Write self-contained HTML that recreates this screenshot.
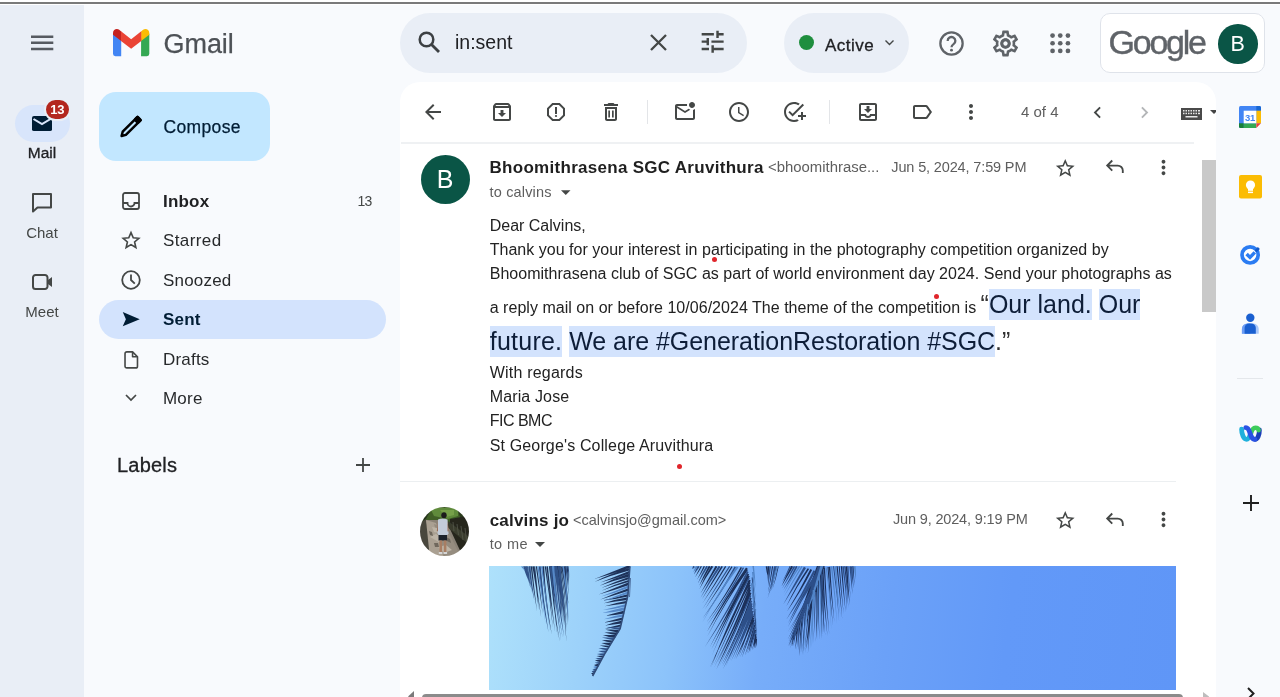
<!DOCTYPE html>
<html lang="en">
<head>
<meta charset="utf-8">
<title>Gmail</title>
<style>
*{box-sizing:border-box;margin:0;padding:0}
html,body{width:1280px;height:697px;overflow:hidden}
body{position:relative;will-change:transform;background:#f8fafd;font-family:"Liberation Sans",sans-serif;color:#202124}
.abs{position:absolute}
.t{position:absolute;white-space:nowrap;line-height:1}
svg{position:absolute;overflow:visible}
#topwhite{left:0;top:0;width:1280px;height:5px;background:#fff}
#topline{left:0;top:2px;width:1280px;height:2px;background:#7a7a7a}
#rail{left:0;top:5px;width:84px;height:692px;background:#e9eef6}
#mailpill{left:15px;top:104.500px;width:55px;height:37px;border-radius:19px;background:#d8e5fb}
#badge{left:43.500px;top:98px;width:27.500px;height:23px;border-radius:12px;background:#b3261e;border:2px solid #e9eef6;color:#fff;font-weight:bold;font-size:13px;text-align:center;line-height:19px;letter-spacing:-0.300px}
#compose{left:99px;top:92px;width:171px;height:69px;border-radius:17px;background:#c2e7ff}
#sentpill{left:99px;top:300px;width:287px;height:39px;border-radius:20px;background:#d3e3fd}
.nav{font-size:17px;color:#27292b;letter-spacing:0.2px;margin-top:1px}
.rl{font-size:15px;color:#444746;width:84px;text-align:center;left:0}
#search{left:400px;top:13px;width:347px;height:60px;border-radius:30px;background:#e9eef6}
#active{left:784.300px;top:13px;width:125px;height:60px;border-radius:30px;background:#e9eef6}
#gbox{left:1100px;top:13px;width:165px;height:60px;border-radius:10px;background:#fff;border:1px solid #dfe3ea}
#gavatar{left:1218px;top:24px;width:39.500px;height:39.500px;border-radius:50%;background:#0a5546;color:#fff;font-size:21.500px;text-align:center;line-height:41px}
#panel{left:400px;top:82px;width:816px;height:615px;background:#fff;border-radius:20px 20px 0 0}
#tbline{left:401px;top:141.5px;width:793px;height:2px;background:#eff1f3}
#msgline{left:400px;top:481px;width:776px;height:1px;background:#eceff1}
#av1{left:420.500px;top:154.800px;width:49px;height:49px;border-radius:50%;background:#0a5546;color:#fff;font-size:25px;text-align:center;line-height:49px}
.body{font-size:16px;color:#222}
.big{font-size:25px;color:#333;line-height:30px}
.hl{background:#d3e3fd;display:inline-block;height:30.500px;line-height:30px;color:#0d1d38}
.meta{font-size:14.5px;color:#5e5e5e}
#vscroll{left:1202px;top:160px;width:14px;height:151.500px;background:#c9c9c9}
#hscroll{left:422px;top:694px;width:761px;height:5px;background:#8b8b8b;border-radius:4px 4px 0 0}
#photo{left:489px;top:566px;width:687px;height:123.500px;background:linear-gradient(97deg,#aee1fb 0%,#9dd2fa 14%,#8cc3fa 27%,#77adf9 40%,#6ba1f8 58%,#6299f8 75%,#5f96f7 100%);overflow:hidden}
</style>
</head>
<body>
<div class="abs" id="topwhite"></div>
<div class="abs" id="topline"></div>
<div class="abs" id="rail"></div>

<!-- hamburger -->
<svg style="left:31px;top:33px" width="22" height="20" viewBox="0 0 22 20"><path d="M0 3.700h22.300M0 9.850h22.300M0 16h22.300" stroke="#565a61" stroke-width="2.500" fill="none"/></svg>

<!-- rail -->
<div class="abs" id="mailpill"></div>
<svg style="left:32px;top:116px" width="20" height="15" viewBox="0 0 20 16" preserveAspectRatio="none"><path d="M2 0h16a2 2 0 0 1 2 2v12a2 2 0 0 1-2 2H2a2 2 0 0 1-2-2V2a2 2 0 0 1 2-2z" fill="#001d35"/><path d="M1.500 3.200L10 8.600l8.500-5.400" stroke="#d8e5fb" stroke-width="2.2" fill="none"/></svg>
<div class="abs" id="badge">13</div>
<div class="t rl" style="top:145.300px;color:#202124;font-size:15.500px;-webkit-text-stroke:0.300px #202124">Mail</div>
<svg style="left:32px;top:193px" width="20" height="20" viewBox="0 0 20 20"><path d="M1 1h18v13.500H5.500L1 18.500z" stroke="#444746" stroke-width="2" fill="none" stroke-linejoin="round"/></svg>
<div class="t rl" style="top:225px">Chat</div>
<svg style="left:32px;top:273.600px" width="21" height="16" viewBox="0 0 21 16"><path d="M3.500 1h9.500a2.500 2.500 0 0 1 2.500 2.500v9a2.500 2.500 0 0 1-2.500 2.500H3.500A2.500 2.500 0 0 1 1 12.500v-9A2.500 2.500 0 0 1 3.500 1z" stroke="#444746" stroke-width="2" fill="none"/><path d="M16 6l4-3v10l-4-3z" fill="#444746"/></svg>
<div class="t rl" style="top:304px">Meet</div>

<!-- logo -->
<svg style="left:113px;top:29px" width="36.300" height="27.300" viewBox="0 0 38 28" preserveAspectRatio="none">
<path d="M0 5v20.500a2.500 2.500 0 0 0 2.500 2.500H8.600V10z" fill="#4285f4"/>
<path d="M29.400 10v18h6.100a2.500 2.500 0 0 0 2.500-2.500V5z" fill="#34a853"/>
<path d="M29.400 2.500V12.300L38 6V4c0-3.500-4-5.300-6.500-3.200z" fill="#fbbc04"/>
<path d="M0 4v2l8.600 6.300V2.500L6.500 0.800C4-1.300 0 0.500 0 4z" fill="#c5221f"/>
<path d="M8.400 12.200V2.400L19 10.500l10.600-8.100V12.200L19 20.200z" fill="#ea4335"/>
</svg>
<div class="t" style="left:163.600px;top:31px;font-size:27px;color:#4d5156;letter-spacing:-0.100px;-webkit-text-stroke:0.250px #4d5156">Gmail</div>

<!-- compose -->
<div class="abs" id="compose"></div>
<svg style="left:119px;top:115px" width="24" height="24" viewBox="0 0 24 24"><g transform="translate(12,11.600) rotate(45)"><path d="M-2.250 -11.500h4.500V9.500L0 13.300L-2.250 9.500z" stroke="#000" stroke-width="2.500" fill="none" stroke-linejoin="round"/><rect x="-3.500" y="-12.750" width="7" height="6.500" rx="2" fill="#000"/></g></svg>
<div class="t" style="left:163.500px;top:119px;font-size:17.500px;color:#001d35;letter-spacing:0.350px;-webkit-text-stroke:0.250px #001d35">Compose</div>

<!-- nav -->
<div class="abs" id="sentpill"></div>
<svg style="left:122px;top:192px" width="18" height="18" viewBox="0 0 18 18"><path d="M3 1h12a2 2 0 0 1 2 2v12a2 2 0 0 1-2 2H3a2 2 0 0 1-2-2V3a2 2 0 0 1 2-2z" stroke="#444746" stroke-width="1.800" fill="none"/><path d="M1 11h4.500a3.500 3.500 0 0 0 7 0H17" stroke="#444746" stroke-width="1.800" fill="none"/></svg>
<div class="t nav" style="left:163px;top:192px;font-weight:bold;color:#202124">Inbox</div>
<div class="t" style="left:357.500px;top:194px;font-size:14px;color:#444746;letter-spacing:-0.900px">13</div>
<svg style="left:122px;top:231.200px" width="18" height="18" viewBox="0 0 20 20"><path d="M10 1.800l2.500 5.700l6.200 0.600l-4.700 4.100l1.400 6.100L10 15.100l-5.400 3.200l1.400-6.100L1.300 8.100l6.200-0.600z" stroke="#444746" stroke-width="1.800" fill="none" stroke-linejoin="miter"/></svg>
<div class="t nav" style="left:163px;top:231px;letter-spacing:0.4px">Starred</div>
<svg style="left:121px;top:270px" width="20" height="20" viewBox="0 0 20 20"><circle cx="10" cy="10" r="8.800" stroke="#444746" stroke-width="1.800" fill="none"/><path d="M10 4.500V10l3.800 3.600" stroke="#444746" stroke-width="1.800" fill="none"/></svg>
<div class="t nav" style="left:163px;top:271px">Snoozed</div>
<svg style="left:121.700px;top:312.300px" width="18.500" height="14.300" viewBox="0 0 19 16"><path d="M0 0l19 8L0 16l3.500-8z" fill="#001d35"/></svg>
<div class="t nav" style="left:163px;top:310px;font-weight:bold;color:#001d35">Sent</div>
<svg style="left:123.800px;top:351px" width="14.500" height="17.800" viewBox="0 0 16 20"><path d="M1 3a2 2 0 0 1 2-2h6.500L15 6.500V17a2 2 0 0 1-2 2H3a2 2 0 0 1-2-2z" stroke="#444746" stroke-width="1.800" fill="none" stroke-linejoin="round"/><path d="M9.500 1v5.500H15" stroke="#444746" stroke-width="1.800" fill="none" stroke-linejoin="round"/></svg>
<div class="t nav" style="left:163px;top:350px">Drafts</div>
<svg style="left:125px;top:394px" width="12" height="8" viewBox="0 0 12 8"><path d="M1 1l5 5l5-5" stroke="#444746" stroke-width="1.700" fill="none"/></svg>
<div class="t nav" style="left:163px;top:389px">More</div>
<div class="t" style="left:117px;top:455px;font-size:20px;color:#202124;letter-spacing:0.200px;-webkit-text-stroke:0.300px #202124">Labels</div>
<svg style="left:356px;top:458px" width="14" height="14" viewBox="0 0 14 14"><path d="M7 0v14M0 7h14" stroke="#444746" stroke-width="1.800"/></svg>

<!-- search -->
<div class="abs" id="search"></div>
<svg style="left:418px;top:31px" width="23" height="23" viewBox="0 0 23 23"><circle cx="8.500" cy="8.500" r="6.800" stroke="#3c4043" stroke-width="2.500" fill="none"/><path d="M13.500 13.500l7.500 7.500" stroke="#3c4043" stroke-width="2.800"/></svg>
<div class="t" style="left:455px;top:33px;font-size:19.500px;color:#202124">in:sent</div>
<svg style="left:650px;top:34px" width="17" height="17" viewBox="0 0 17 17"><path d="M1 1l15 15M16 1L1 16" stroke="#444746" stroke-width="2.300"/></svg>
<svg style="left:697.900px;top:27.200px" width="29.300" height="29.300" viewBox="0 0 24 24"><path fill="#444746" d="M3 17v2h6v-2H3zM3 5v2h10V5H3zm10 16v-2h8v-2h-8v-2h-2v6h2zM7 9v2H3v2h4v2h2V9H7zm14 4v-2H11v2h10zm-6-4h2V7h4V5h-4V3h-2v6z"/></svg>

<!-- active -->
<div class="abs" id="active"></div>
<div class="abs" style="left:798.800px;top:35.200px;width:15px;height:15px;border-radius:50%;background:#1e8e3e"></div>
<div class="t" style="left:825px;top:36.500px;font-size:17px;color:#202124;letter-spacing:0.500px;-webkit-text-stroke:0.300px #202124">Active</div>
<svg style="left:885.200px;top:40px" width="9" height="6" viewBox="0 0 9 6"><path d="M0.500 0.500l4 4l4-4" stroke="#444746" stroke-width="1.400" fill="none"/></svg>

<!-- help, settings, apps -->
<svg style="left:939.100px;top:30.500px" width="25" height="25" viewBox="0 0 24 24"><circle cx="12" cy="12" r="10.700" stroke="#5f6368" stroke-width="2.200" fill="none"/><path d="M8.300 9.500a3.700 3.700 0 1 1 5.700 3.100c-1.300 0.900-2 1.500-2 3" stroke="#5f6368" stroke-width="2.200" fill="none"/><circle cx="12" cy="18.400" r="1.400" fill="#5f6368"/></svg>
<svg style="left:990px;top:27.500px" width="31" height="31" viewBox="0 0 24 24"><path d="M19.430 12.980c.040-.320.070-.640.070-.980s-.030-.660-.070-.980l2.110-1.650c.190-.150.240-.420.120-.640l-2-3.460c-.120-.220-.390-.300-.610-.220l-2.490 1c-.520-.400-1.080-.730-1.690-.980l-.380-2.650C14.460 2.180 14.250 2 14 2h-4c-.250 0-.460.180-.490.420l-.380 2.650c-.610.250-1.170.590-1.690.980l-2.490-1c-.230-.090-.490 0-.610.220l-2 3.460c-.130.220-.070.490.12.640l2.110 1.650c-.040.320-.070.650-.070.980s.030.660.070.980l-2.110 1.650c-.190.150-.240.420-.120.640l2 3.460c.120.220.390.300.610.220l2.490-1c.520.400 1.080.730 1.690.980l.380 2.650c.030.240.240.420.490.420h4c.250 0 .460-.180.490-.420l.380-2.650c.610-.250 1.170-.590 1.690-.980l2.490 1c.230.090.490 0 .610-.220l2-3.460c.120-.220.070-.490-.12-.640l-2.110-1.650zm-1.980-1.710c.040.310.050.520.050.730 0 .210-.020.430-.050.730l-.140 1.130.890.700 1.080.840-.700 1.210-1.270-.510-1.040-.420-.900.680c-.430.320-.840.560-1.250.730l-1.060.430-.160 1.130-.200 1.350h-1.400l-.190-1.350-.160-1.130-1.060-.430c-.430-.180-.830-.410-1.230-.710l-.910-.700-1.060.430-1.270.510-.700-1.210 1.080-.840.890-.700-.140-1.130c-.030-.310-.050-.540-.050-.740s.020-.430.050-.730l.140-1.130-.890-.700-1.080-.840.700-1.210 1.270.510 1.040.420.900-.680c.430-.320.840-.560 1.250-.730l1.060-.430.160-1.130.200-1.350h1.390l.190 1.350.160 1.130 1.060.430c.430.180.830.410 1.230.71l.910.700 1.060-.430 1.270-.510.700 1.210-1.070.850-.890.700.140 1.130zM12 8c-2.210 0-4 1.790-4 4s1.790 4 4 4 4-1.790 4-4-1.790-4-4-4zm0 6c-1.100 0-2-.900-2-2s.900-2 2-2 2 .900 2 2-.900 2-2 2z" fill="#5f6368"/><circle cx="12" cy="12" r="2.800" stroke="#5f6368" stroke-width="2.200" fill="none"/></svg>
<svg style="left:1049.700px;top:32.700px" width="20.500" height="20.500" viewBox="0 0 20 20"><g fill="#5f6368"><circle cx="2.500" cy="2.500" r="2.300"/><circle cx="10" cy="2.500" r="2.300"/><circle cx="17.500" cy="2.500" r="2.300"/><circle cx="2.500" cy="10" r="2.300"/><circle cx="10" cy="10" r="2.300"/><circle cx="17.500" cy="10" r="2.300"/><circle cx="2.500" cy="17.500" r="2.300"/><circle cx="10" cy="17.500" r="2.300"/><circle cx="17.500" cy="17.500" r="2.300"/></g></svg>

<!-- google box -->
<div class="abs" id="gbox"></div>
<div class="t" style="left:1108.600px;top:24.500px;font-size:34px;color:#5f6368;letter-spacing:-2.250px;-webkit-text-stroke:0.400px #5f6368">Google</div>
<div class="abs" id="gavatar">B</div>

<!-- main panel -->
<div class="abs" id="panel"></div>
<div class="abs" id="tbline"></div>

<!-- toolbar -->
<svg style="left:420.50px;top:100.00px" width="24" height="24" viewBox="0 0 24 24"><path fill="#444746" d="M20 11H7.830l5.590-5.590L12 4l-8 8 8 8 1.410-1.410L7.830 13H20v-2z"/></svg>
<svg style="left:489.50px;top:100.00px" width="24" height="24" viewBox="0 0 24 24"><path fill="#444746" d="M20.540 5.230l-1.390-1.680C18.880 3.210 18.470 3 18 3H6c-.470 0-.880.210-1.160.550L3.460 5.230C3.170 5.570 3 6.020 3 6.500V19c0 1.100.900 2 2 2h14c1.100 0 2-.900 2-2V6.500c0-.480-.170-.930-.460-1.270zM6.240 5h11.520l.810.970H5.440l.800-.970zM5 19V8h14v11H5zm8.450-9h-2.900v3H8l4 4 4-4h-2.550z"/></svg>
<svg style="left:544.00px;top:100.00px" width="24" height="24" viewBox="0 0 24 24"><path fill="#444746" d="M15.730 3H8.270L3 8.270v7.460L8.270 21h7.460L21 15.730V8.270L15.730 3zM19 14.900L14.900 19H9.100L5 14.900V9.100L9.100 5h5.800L19 9.100v5.800z"/><circle cx="12" cy="16" r="1.100" fill="#444746"/><path fill="#444746" d="M11 7h2v7h-2z"/></svg>
<svg style="left:598.50px;top:100.00px" width="24" height="24" viewBox="0 0 24 24"><path fill="#444746" d="M16 9v10H8V9h8m-1.500-6h-5l-1 1H5v2h14V4h-3.500l-1-1zM18 7H6v12c0 1.100.900 2 2 2h8c1.100 0 2-.900 2-2V7z"/><path fill="#444746" d="M9.300 10.500h1.700v7H9.300zM13 10.500h1.700v7H13z"/></svg>
<svg style="left:673.00px;top:100.00px" width="24" height="24" viewBox="0 0 24 24"><path fill="#444746" d="M22 8.980V18c0 1.100-.900 2-2 2H4c-1.100 0-2-.900-2-2V6c0-1.100.900-2 2-2h10.100c-.060.320-.100.660-.100 1s.040.680.100 1H4l8 5 3.670-2.290c.470.430 1.020.760 1.630.980L12 13 4 8v10h16V9.900c.740-.150 1.420-.480 2-.920zM16 5c0 1.660 1.340 3 3 3s3-1.340 3-3-1.340-3-3-3-3 1.340-3 3z"/></svg>
<svg style="left:727.00px;top:100.00px" width="24" height="24" viewBox="0 0 24 24"><path fill="#444746" d="M11.990 2C6.470 2 2 6.480 2 12s4.470 10 9.990 10C17.520 22 22 17.520 22 12S17.520 2 11.990 2zM12 20c-4.420 0-8-3.580-8-8s3.580-8 8-8 8 3.580 8 8-3.580 8-8 8zm.5-13H11v6l5.250 3.150.750-1.230-4.500-2.670z"/></svg>
<svg style="left:781.50px;top:100.00px" width="24" height="24" viewBox="0 0 24 24"><path fill="#444746" d="M22 5.180L10.590 16.600l-4.240-4.240 1.410-1.410 2.830 2.830 10-10L22 5.180zM12 20c-4.410 0-8-3.590-8-8s3.590-8 8-8c1.570 0 3.040.460 4.280 1.250l1.450-1.450C16.100 2.670 14.130 2 12 2 6.480 2 2 6.480 2 12s4.480 10 10 10c1.730 0 3.360-.440 4.780-1.220l-1.500-1.500c-1 .460-2.110.720-3.280.720zm7-5h-3v2h3v3h2v-3h3v-2h-3v-3h-2v3z"/></svg>
<svg style="left:855.75px;top:100.00px" width="24" height="24" viewBox="0 0 24 24"><path fill="#444746" d="M16 9h-2.550V6h-2.900v3H8l4 4zm3-6H4.990C3.880 3 3 3.900 3 5v14c0 1.100.880 2 1.990 2H19c1.100 0 2-.900 2-2V5c0-1.100-.900-2-2-2zm0 16H5v-3h3.560c.690 1.190 1.970 2 3.450 2s2.750-.810 3.450-2H19v3zm0-5h-4.990c0 1.100-.900 2-2 2s-2-.900-2-2H5V5h14v9z"/></svg>
<svg style="left:909.50px;top:100.00px" width="24" height="24" viewBox="0 0 24 24"><path fill="#444746" d="M17.630 5.840C17.270 5.330 16.670 5 16 5L5 5.010C3.900 5.010 3 5.900 3 7v10c0 1.100.900 1.990 2 1.990L16 19c.670 0 1.270-.330 1.630-.840L22 12l-4.370-6.160zM16 17H5V7h11l3.550 5L16 17z"/></svg>
<svg style="left:959.00px;top:100.00px" width="24" height="24" viewBox="0 0 24 24"><path fill="#444746" d="M12 8c1.100 0 2-.900 2-2s-.900-2-2-2-2 .900-2 2 .900 2 2 2zm0 2c-1.100 0-2 .900-2 2s.900 2 2 2 2-.900 2-2-.900-2-2-2zm0 6c-1.100 0-2 .900-2 2s.900 2 2 2 2-.900 2-2-.900-2-2-2z"/></svg>
<div class="abs" style="left:646.5px;top:100px;width:1px;height:24px;background:#e3e5e8"></div>
<div class="abs" style="left:829px;top:100px;width:1px;height:24px;background:#e3e5e8"></div>
<div class="t" style="left:1021px;top:104px;font-size:15px;color:#5e5e5e">4 of 4</div>
<svg style="left:1086.00px;top:100.50px" width="23" height="23" viewBox="0 0 24 24"><path fill="#444746" d="M15.410 7.410L14 6l-6 6 6 6 1.410-1.410L10.830 12z"/></svg>
<svg style="left:1133.00px;top:100.50px" width="23" height="23" viewBox="0 0 24 24"><path fill="#b4b6b8" d="M10 6L8.590 7.410 13.170 12l-4.580 4.590L10 18l6-6z"/></svg>
<svg style="left:1180.5px;top:107.5px" width="21" height="12" viewBox="0 0 21 12"><rect width="21" height="12" fill="#4a4a4a"/><g fill="#e8e8e8"><rect x="2" y="2" width="1.500" height="1.500"/><rect x="4.500" y="2" width="1.500" height="1.500"/><rect x="7" y="2" width="1.500" height="1.500"/><rect x="9.500" y="2" width="1.500" height="1.500"/><rect x="12" y="2" width="1.500" height="1.500"/><rect x="14.500" y="2" width="1.500" height="1.500"/><rect x="17" y="2" width="2" height="1.500"/><rect x="2" y="4.700" width="1.500" height="1.500"/><rect x="4.500" y="4.700" width="1.500" height="1.500"/><rect x="7" y="4.700" width="1.500" height="1.500"/><rect x="9.500" y="4.700" width="1.500" height="1.500"/><rect x="12" y="4.700" width="1.500" height="1.500"/><rect x="14.500" y="4.700" width="1.500" height="1.500"/><rect x="17" y="4.700" width="2" height="1.500"/><rect x="4.500" y="8" width="12" height="1.500"/></g></svg>
<svg style="left:1210px;top:109.5px;overflow:hidden" width="6" height="4" viewBox="0 0 6 4"><path d="M0 0h8L4 4z" fill="#444"/></svg>
<!-- msg icons -->
<svg style="left:1053.75px;top:156.75px" width="22.5" height="22.5" viewBox="0 0 24 24"><path fill="#444746" d="M22 9.240l-7.190-.620L12 2 9.190 8.630 2 9.240l5.460 4.730L5.820 21 12 17.270 18.180 21l-1.630-7.030L22 9.240zM12 15.400l-3.760 2.270 1-4.280-3.320-2.880 4.380-.380L12 6.100l1.710 4.040 4.380.380-3.320 2.880 1 4.280L12 15.400z"/></svg>
<svg style="left:1104.00px;top:155.30px" width="22" height="22" viewBox="0 0 24 24"><path stroke="#444746" stroke-width="2" fill="none" d="M9 6L3.500 11.500l5.500 5.500M3.500 11.500h11.500a5.500 5.500 0 0 1 5.500 5.500v2.500"/></svg>
<svg style="left:1152.30px;top:156.00px" width="23" height="23" viewBox="0 0 24 24"><path fill="#444746" d="M12 8c1.100 0 2-.900 2-2s-.900-2-2-2-2 .900-2 2 .900 2 2 2zm0 2c-1.100 0-2 .900-2 2s.900 2 2 2 2-.900 2-2-.900-2-2-2zm0 6c-1.100 0-2 .900-2 2s.900 2 2 2 2-.900 2-2-.900-2-2-2z"/></svg>
<svg style="left:1053.75px;top:509.100px" width="22.5" height="22.5" viewBox="0 0 24 24"><path fill="#444746" d="M22 9.240l-7.190-.620L12 2 9.190 8.630 2 9.240l5.460 4.730L5.820 21 12 17.270 18.180 21l-1.630-7.030L22 9.240zM12 15.400l-3.760 2.270 1-4.280-3.320-2.880 4.380-.380L12 6.100l1.710 4.040 4.380.380-3.320 2.880 1 4.280L12 15.400z"/></svg>
<svg style="left:1104.00px;top:507.80px" width="22" height="22" viewBox="0 0 24 24"><path stroke="#444746" stroke-width="2" fill="none" d="M9 6L3.500 11.500l5.500 5.500M3.500 11.500h11.500a5.500 5.500 0 0 1 5.500 5.500v2.500"/></svg>
<svg style="left:1152.30px;top:507.80px" width="23" height="23" viewBox="0 0 24 24"><path fill="#444746" d="M12 8c1.100 0 2-.900 2-2s-.900-2-2-2-2 .900-2 2 .900 2 2 2zm0 2c-1.100 0-2 .900-2 2s.900 2 2 2 2-.900 2-2-.900-2-2-2zm0 6c-1.100 0-2 .900-2 2s.900 2 2 2 2-.900 2-2-.900-2-2-2z"/></svg>
<svg style="left:561px;top:189.500px" width="9.500" height="5" viewBox="0 0 10 5"><path d="M0 0h10L5 5z" fill="#444746"/></svg>
<svg style="left:535px;top:542px" width="10" height="5" viewBox="0 0 10 5"><path d="M0 0h10L5 5z" fill="#444746"/></svg>
<!-- side panel -->
<svg style="left:1239px;top:105.500px" width="22" height="22" viewBox="0 0 22 22">
<rect x="0" y="0" width="22" height="22" rx="1.500" fill="#4285f4"/>
<path d="M17.300 0H20.500A1.500 1.500 0 0 1 22 1.500V4.700H17.300z" fill="#1967d2"/>
<rect x="17.300" y="4.700" width="4.700" height="12.600" fill="#fbbc04"/>
<rect x="4.700" y="17.300" width="12.600" height="4.700" fill="#34a853"/>
<path d="M0 17.300H4.700V22H1.500A1.500 1.500 0 0 1 0 20.500z" fill="#188038"/>
<path d="M17.300 17.300H22V22H17.300z" fill="#f8fafd"/>
<path d="M17.300 17.300H22L17.300 22z" fill="#ea4335"/>
<rect x="4.700" y="4.700" width="12.600" height="12.600" fill="#fff"/>
<text x="10.900" y="14.600" font-family="Liberation Sans, sans-serif" font-size="9.500" font-weight="bold" fill="#4285f4" text-anchor="middle" letter-spacing="-0.500">31</text>
</svg>
<svg style="left:1239px;top:174.500px" width="23" height="23.500" viewBox="0 0 23 23.500">
<rect width="23" height="23.500" rx="2" fill="#fbbc04"/>
<circle cx="11.500" cy="10" r="4.600" fill="#fff"/>
<rect x="9" y="13.500" width="5" height="2.300" fill="#fff"/>
<rect x="9" y="16.600" width="5" height="1.500" fill="#fff"/>
</svg>
<svg style="left:1238px;top:243px" width="24" height="24" viewBox="0 0 24 24">
<circle cx="12.100" cy="11.900" r="8.100" stroke="#2b7cf2" stroke-width="3.700" fill="#fff"/>
<path d="M16.600 7.200l3.300-3.300l2 2l-3.300 3.300z" fill="#1259c9"/>
<path d="M8.600 11l3.400 3.400l4.800-5" stroke="#2b7cf2" stroke-width="3.400" fill="none"/>
</svg>
<svg style="left:1241px;top:313px" width="19" height="21" viewBox="0 0 19 21">
<circle cx="9.300" cy="4.800" r="4.200" fill="#1a5fd0"/>
<path d="M0.900 20.700V16a5.500 5.500 0 0 1 5.500-5.500h6.200A5.500 5.500 0 0 1 17.700 16v4.700z" fill="#a8c7fa"/>
<path d="M0.900 20.700V16a5.500 5.500 0 0 1 5.500-5.500h3v10.200z" fill="#6b9cf5"/>
<path d="M3.600 20.700V15a4.500 4.500 0 0 1 4.500-4.500h2.200A4.500 4.500 0 0 1 14.800 15v5.700z" fill="#1a5fd0"/>
</svg>
<div class="abs" style="left:1237px;top:378px;width:26px;height:1px;background:#e4e7eb"></div>
<svg style="left:1239px;top:425px" width="23" height="17" viewBox="0 0 23 17">
<path d="M2.600 4.200C2.600 9 4.600 14.300 7.600 14.300C9.800 14.300 10.600 11.500 11.500 8.500" stroke="#1fb0dc" stroke-width="4.800" fill="none" stroke-linecap="round"/>
<path d="M20.400 5C20.400 9.500 18.800 14.300 16 14.300" stroke="#1a3fb8" stroke-width="4.800" fill="none" stroke-linecap="round"/>
<path d="M11.800 9C12.800 5 14 2.700 16.400 2.700C18.300 2.700 19.300 3.600 19.600 5.200" stroke="#3dcc5b" stroke-width="4.600" fill="none" stroke-linecap="round"/>
<path d="M6.800 2.700C10 2.700 10.500 7 11.800 10.500C12.800 13 14 14.300 16 14.300" stroke="#2a52e4" stroke-width="4.800" fill="none" stroke-linecap="round"/>
</svg>
<svg style="left:1242.500px;top:495px" width="16" height="16" viewBox="0 0 16 16"><path d="M8 0v16M0 8h16" stroke="#1f1f1f" stroke-width="1.900"/></svg>
<svg style="left:1247px;top:687px" width="9" height="12" viewBox="0 0 9 12"><path d="M1 1l5.500 5.500L1 12" stroke="#1f1f1f" stroke-width="2" fill="none"/></svg>


<div class="abs" id="av1">B</div>
<div class="t" style="left:489.500px;top:159px;font-size:17px;font-weight:bold;color:#1f1f1f;letter-spacing:0.290px">Bhoomithrasena SGC Aruvithura</div>
<div class="t meta" style="left:768px;top:160px;font-size:14.900px">&lt;bhoomithrase...</div>
<div class="t meta" style="left:891.300px;top:160px;letter-spacing:-0.140px">Jun 5, 2024, 7:59 PM</div>
<div class="t meta" style="left:489.500px;top:185px;letter-spacing:0.170px">to calvins</div>

<div class="t body" style="left:489.700px;top:218px">Dear Calvins,</div>
<div class="t body" style="left:489.700px;top:242px;letter-spacing:0.020px">Thank you for your interest in participating in the photography competition organized by</div>
<div class="t body" style="left:489.700px;top:266px;letter-spacing:0.020px">Bhoomithrasena club of SGC as part of world environment day 2024. Send your photographs as</div>
<div class="t body" style="left:489.700px;top:300px;letter-spacing:0.030px">a reply mail on or before 10/06/2024 The theme of the competition is</div>
<div class="t big" style="left:980.600px;top:289.400px">“<span class="hl">Our land.</span> <span class="hl">Our</span></div>
<div class="t big" style="left:489.700px;top:326.400px"><span class="hl" style="letter-spacing:0.250px">future.</span> <span class="hl" style="letter-spacing:-0.050px">We are #GenerationRestoration #SGC</span>.”</div>
<div class="t body" style="left:489.700px;top:365px;letter-spacing:0.210px">With regards</div>
<div class="t body" style="left:489.700px;top:389px;letter-spacing:0.140px">Maria Jose</div>
<div class="t body" style="left:489.700px;top:412.700px;letter-spacing:-0.500px">FIC BMC</div>
<div class="t body" style="left:489.700px;top:437.700px;letter-spacing:0.150px">St George's College Aruvithura</div>

<div class="abs" style="left:711.800px;top:256.800px;width:5px;height:5px;border-radius:50%;background:#e0252b"></div>
<div class="abs" style="left:933.800px;top:294px;width:5px;height:5px;border-radius:50%;background:#e0252b"></div>
<div class="abs" style="left:676.800px;top:463.800px;width:5px;height:5px;border-radius:50%;background:#e0252b"></div>
<div class="abs" id="msgline"></div>
<!--AV2--><svg style="left:420px;top:507px" width="49" height="49" viewBox="0 0 49 49">
<defs><clipPath id="avc"><circle cx="24.500" cy="24.500" r="24.500"/></clipPath><filter id="avb" x="-10%" y="-10%" width="120%" height="120%"><feGaussianBlur stdDeviation="0.550"/></filter></defs>
<g clip-path="url(#avc)"><g filter="url(#avb)">
<rect x="-3" y="-3" width="55" height="55" fill="#8a8276"/>
<path d="M-3 -3H52V17L34 19L20 13L6 13L-3 20z" fill="#3f5f28"/>
<path d="M10 1H38V9L28 12L14 9z" fill="#5f8a3a"/>
<path d="M20 3H34V8L26 10z" fill="#76a048"/>
<path d="M-3 -3H14L6 12L-3 20z" fill="#27351d"/>
<path d="M36 -3H52V12L40 10z" fill="#2a3a1e"/>
<path d="M30 12L52 8V52H44L30 22z" fill="#26261f"/>
<path d="M28 14L52 32V40L27 20z" fill="#3a3d2e"/>
<path d="M33 15L34 24M37 17L38.500 28M41 19L43 33M45 21L47 38" stroke="#55584a" stroke-width="0.800" fill="none"/>
<path d="M-3 18L6 12L11 40L9 52H-3z" fill="#48473c"/>
<path d="M6 13L16 16L30 52H10z" fill="#aaa092"/>
<path d="M14 17L27 22L42 52H24z" fill="#958c7f"/>
<path d="M10 30l6-3l8 4l-5 4zM18 40l8-2l6 5l-8 3zM12 20l5 1l2 5l-5-1z" fill="#bdb4a6"/>
<path d="M9 24l3 1l1 4l-3-1zM14 36l4 0l1 4l-4 0zM26 30l4 2l1 4l-4-2z" fill="#6f685d"/>
<ellipse cx="24" cy="8.300" rx="2.700" ry="3" fill="#1a1a1a"/>
<path d="M18 12.500Q22.500 10.500 27.500 12.500L28.500 26.500L27.500 28H18.500L17.500 26.500z" fill="#c3ccd9"/>
<path d="M18 14L16.800 24L18 24.500zM27.500 14L28.800 24L27.500 24.500z" fill="#9a7058"/>
<rect x="18.500" y="28" width="8.500" height="5.500" fill="#1f2329"/>
<rect x="19.500" y="33.500" width="2.600" height="12" fill="#a87e63"/>
<rect x="23.800" y="33.500" width="2.600" height="12" fill="#a87e63"/>
<rect x="18.800" y="45" width="3.600" height="2" fill="#d5d5d5"/>
<rect x="23.500" y="45" width="3.600" height="2" fill="#d5d5d5"/>
</g></g></svg><!--/AV2-->

<div class="t" style="left:489.700px;top:511.700px;font-size:17px;font-weight:bold;color:#1f1f1f;letter-spacing:0.200px">calvins jo</div>
<div class="t meta" style="left:573px;top:512.500px">&lt;calvinsjo@gmail.com&gt;</div>
<div class="t meta" style="left:893px;top:512px;letter-spacing:-0.160px">Jun 9, 2024, 9:19 PM</div>
<div class="t meta" style="left:489.700px;top:537px;letter-spacing:0.400px">to me</div>
<div class="abs" id="photo"><!--PALM--><svg style="left:0;top:0;opacity:0.92;filter:blur(0.4px)" width="687" height="123" viewBox="0 0 687 123">
<path fill="#14264d" d="M41.7 0.4Q44.1 23.2 48.1 45.8Q45.2 23.1 43.1 0.2ZM43.4 0.4Q47.5 21.8 49.7 43.4Q48.6 21.6 44.9 0.2ZM45.1 0.4Q47.4 26.5 52.3 52.3Q48.3 26.4 46.1 0.2ZM46.8 0.4Q50.5 24.7 53.8 49.0Q51.5 24.5 48.0 0.2ZM53.3 0.4Q55.3 35.0 62.9 69.0Q56.8 34.9 55.1 0.2ZM55.7 0.4Q60.9 31.0 63.8 61.9Q61.8 30.9 56.9 0.2ZM57.4 0.4Q61.1 33.6 66.1 66.6Q62.2 33.5 58.9 0.2ZM59.9 0.3Q64.6 35.9 68.6 71.5Q65.4 35.8 60.9 0.2ZM61.1 0.4Q63.0 38.8 70.9 76.5Q64.2 38.6 62.7 0.2ZM67.5 0.4Q74.7 38.0 77.5 76.2Q75.8 37.9 68.9 0.2ZM69.9 0.4Q74.5 32.5 77.8 64.7Q75.4 32.4 71.0 0.2ZM71.2 0.3Q76.0 28.5 77.8 56.9Q76.7 28.4 72.2 0.2ZM72.3 0.4Q77.7 29.8 79.0 59.7Q78.8 29.7 73.7 0.2ZM74.4 0.4Q77.0 21.8 79.0 43.3Q78.0 21.7 75.7 0.2ZM75.0 0.4Q75.4 19.4 79.4 38.1Q76.9 19.3 76.9 0.2ZM77.4 0.3Q78.7 10.0 79.7 19.7Q79.8 9.9 78.8 0.2ZM61.7 -0.4Q63.4 23.5 68.0 47.1Q64.8 23.4 63.4 -0.6ZM67.7 -0.4Q71.5 27.7 73.6 56.0Q72.9 27.6 69.5 -0.6ZM211.8 -0.0Q208.7 5.7 206.0 11.6Q209.7 6.2 212.9 0.6ZM214.7 -0.1Q211.6 7.0 207.9 13.8Q212.6 7.6 216.0 0.6ZM219.8 -0.2Q214.5 9.5 210.2 19.7Q215.9 10.2 221.5 0.7ZM222.4 -0.2Q215.3 10.7 210.5 22.9Q216.8 11.5 224.2 0.8ZM226.6 -0.3Q219.1 13.4 211.6 27.2Q220.5 14.3 228.4 0.8ZM232.5 -0.1Q222.4 16.4 212.9 33.3Q223.5 17.1 233.9 0.7ZM236.1 -0.1Q225.2 18.7 213.6 37.0Q226.1 19.3 237.2 0.7ZM242.5 0.2Q229.4 22.2 215.6 43.7Q230.3 22.7 243.5 0.9ZM251.7 1.0Q236.3 30.1 217.2 56.8Q237.3 30.7 253.0 1.8ZM257.0 1.6Q235.5 32.7 217.8 66.1Q236.9 33.6 258.8 2.8ZM257.7 3.4Q235.3 35.8 217.9 71.2Q236.3 36.4 258.9 4.1ZM258.5 7.6Q239.6 44.9 220.3 82.0Q240.9 45.6 260.2 8.5ZM258.8 9.3Q239.6 45.9 222.4 83.6Q241.1 46.7 260.7 10.2ZM259.8 13.5Q240.3 57.7 220.7 101.9Q241.8 58.4 261.7 14.4ZM260.1 15.7Q237.9 57.2 222.0 101.7Q239.1 57.8 261.7 16.4ZM260.5 18.4Q242.1 58.8 224.5 99.5Q243.1 59.2 261.7 18.9ZM260.6 21.0Q244.7 62.5 224.8 102.1Q245.7 62.9 261.8 21.6ZM260.8 23.5Q245.3 61.2 228.0 98.1Q246.3 61.7 262.0 24.1ZM260.7 26.2Q244.9 65.4 227.2 103.6Q246.4 66.0 262.5 27.0ZM261.4 31.6Q249.3 66.3 232.4 98.9Q250.4 66.8 262.7 32.2ZM263.6 49.2Q256.5 71.8 246.7 93.3Q257.7 72.3 265.1 49.8ZM264.1 51.8Q255.9 71.1 249.6 91.1Q256.9 71.5 265.3 52.2ZM264.3 53.7Q258.7 73.1 251.0 91.6Q259.7 73.4 265.6 54.2ZM265.0 58.8Q260.7 74.6 255.7 90.1Q261.8 74.9 266.4 59.3ZM265.2 63.5Q261.1 75.1 259.5 87.4Q262.8 75.6 267.3 64.1ZM266.0 67.9Q264.9 76.1 263.1 84.2Q266.1 76.4 267.5 68.2ZM266.2 70.1Q265.2 76.6 264.8 83.2Q266.5 76.8 267.8 70.4ZM266.4 72.5Q266.7 77.5 266.7 82.4Q268.0 77.6 268.1 72.7ZM302.3 -0.2Q296.8 9.8 292.4 20.4Q298.2 10.6 304.1 0.8ZM318.7 2.2Q306.5 20.3 297.4 40.3Q307.6 20.9 320.1 3.0ZM321.4 3.1Q310.6 25.0 297.8 45.7Q311.9 25.8 323.1 4.1ZM323.1 22.7Q311.3 48.5 298.5 73.7Q312.5 49.1 324.6 23.4ZM316.2 39.6Q306.2 59.2 299.9 80.3Q307.5 59.7 317.8 40.3ZM312.2 48.8Q307.5 65.9 301.0 82.4Q308.5 66.3 313.5 49.2ZM363.5 0.3Q364.3 9.9 365.5 19.5Q365.1 9.9 364.5 0.2ZM356.7 0.4Q358.0 19.7 360.7 38.9Q359.4 19.6 358.4 0.2ZM355.3 0.3Q358.0 21.1 359.3 42.0Q358.8 21.1 356.3 0.2ZM351.8 0.3Q353.7 23.3 356.6 46.2Q354.8 23.2 353.1 0.2ZM349.7 0.3Q351.6 24.3 354.7 48.2Q352.5 24.2 350.7 0.2ZM347.5 0.3Q350.3 26.7 353.2 53.1Q351.3 26.7 348.7 0.2ZM339.8 0.9Q341.7 28.7 345.4 56.3Q342.7 28.6 341.2 0.8ZM338.5 1.1Q340.3 30.9 344.0 60.5Q341.2 30.8 339.6 1.0ZM334.7 1.6Q336.3 35.3 340.3 68.8Q337.4 35.3 336.0 1.5ZM332.8 1.7Q334.0 36.3 338.5 70.7Q335.3 36.2 334.4 1.6ZM331.1 5.6Q334.1 36.3 334.9 67.0Q335.4 36.2 332.7 5.6ZM330.1 8.1Q332.4 40.1 333.0 72.1Q333.6 40.0 331.7 8.1ZM328.9 11.4Q328.6 43.0 330.4 74.7Q329.6 43.0 330.1 11.4ZM326.8 16.0Q328.2 46.0 326.8 75.9Q329.7 46.0 328.5 16.1ZM326.0 19.2Q325.6 48.1 324.5 77.0Q326.4 48.2 326.9 19.3ZM322.8 26.5Q319.4 57.0 318.9 87.7Q320.8 57.1 324.6 26.7ZM322.0 29.1Q320.1 56.1 317.5 83.2Q321.3 56.3 323.5 29.2ZM320.9 31.9Q319.9 59.6 316.4 87.0Q320.9 59.7 322.1 32.0ZM319.4 35.4Q317.9 60.3 315.6 85.2Q318.8 60.4 320.5 35.5ZM316.9 40.8Q313.9 64.9 313.8 89.1Q314.9 65.0 318.1 40.9ZM312.8 49.7Q310.3 70.0 310.6 90.5Q311.2 70.1 314.1 49.8ZM310.8 53.8Q309.0 69.1 309.1 84.5Q310.0 69.1 312.0 53.9ZM307.7 59.5Q307.2 71.5 306.3 83.6Q308.6 71.7 309.4 59.6ZM304.1 66.6Q303.2 73.5 303.0 80.5Q304.6 73.7 305.8 66.8ZM276.7 0.4Q277.4 6.4 279.3 12.2Q278.4 6.2 278.0 0.2ZM278.5 0.3Q278.3 9.0 279.2 17.7Q279.6 9.0 280.2 0.3ZM283.0 0.2Q281.1 13.5 279.0 26.7Q282.1 13.6 284.1 0.4ZM286.7 0.1Q284.4 12.6 281.8 24.9Q285.5 12.8 288.1 0.4ZM288.8 0.2Q286.7 12.0 283.4 23.5Q287.4 12.2 289.7 0.4ZM328.2 -1.0Q319.6 23.7 310.7 48.4Q321.6 24.5 330.8 0.0ZM330.0 -0.9Q319.6 24.3 312.9 50.8Q321.4 24.9 332.3 -0.1ZM333.2 -0.9Q323.1 28.4 316.8 58.8Q325.1 29.0 335.7 -0.1ZM140.4 -1.0Q122.9 5.9 105.5 13.0Q123.6 7.9 141.4 1.6ZM140.3 2.1Q122.5 7.3 105.9 15.7Q123.2 9.1 141.1 4.3ZM140.1 4.9Q125.6 10.7 111.2 16.6Q126.3 12.7 140.9 7.3ZM139.8 7.7Q124.7 12.1 110.6 19.7Q125.4 14.2 140.8 10.4ZM139.7 10.9Q125.7 15.6 112.2 21.9Q126.2 17.3 140.5 13.0ZM139.6 13.9Q125.6 18.1 112.5 24.7Q126.2 19.6 140.2 15.8ZM139.2 16.4Q124.4 22.3 109.7 28.5Q125.1 24.4 140.2 19.1ZM138.9 22.4Q124.9 27.3 111.4 33.6Q125.6 29.2 139.7 24.8ZM138.7 28.2Q126.0 31.7 113.2 34.5Q126.4 33.6 139.1 30.6ZM137.9 31.5Q126.2 33.2 114.9 37.3Q126.6 35.2 138.4 34.0ZM137.1 34.9Q126.2 36.7 115.7 40.3Q126.6 38.7 137.6 37.3ZM134.7 44.7Q125.5 47.0 116.4 49.8Q125.9 49.3 135.3 47.5ZM133.2 51.4Q124.0 53.9 114.9 56.4Q124.5 56.1 133.7 54.1ZM132.4 54.7Q124.1 56.2 116.1 59.4Q124.5 58.4 132.9 57.5ZM131.7 58.4Q123.6 60.3 115.7 62.7Q124.0 62.1 132.1 60.5ZM129.7 64.0Q123.2 63.1 116.4 63.7Q122.9 65.2 129.4 66.7ZM128.1 66.6Q121.8 65.9 115.4 66.4Q121.6 67.9 127.8 69.2ZM126.6 69.1Q120.2 69.0 113.9 68.9Q119.9 71.2 126.2 71.9ZM123.4 74.4Q118.2 73.9 112.9 74.3Q117.9 75.9 123.1 76.8ZM121.8 76.8Q117.1 76.6 112.3 77.0Q116.8 78.7 121.5 79.5ZM120.2 79.7Q115.6 79.3 110.8 79.6Q115.4 80.9 120.0 81.7ZM114.3 89.5Q110.9 89.5 107.4 90.1Q110.8 91.2 114.1 91.6ZM112.0 93.5Q109.0 93.4 105.9 94.5Q108.8 95.6 111.8 96.2ZM109.6 97.7Q107.3 98.0 105.0 98.9Q107.2 100.3 109.4 100.7ZM104.9 106.4Q103.5 106.5 102.1 107.6Q103.3 108.8 104.7 109.2Z"/>
<path fill="#27477f" d="M34.1 0.5Q36.4 7.4 39.1 14.2Q37.6 7.1 35.6 0.1ZM35.8 0.5Q38.2 10.8 41.2 20.9Q39.8 10.4 37.7 0.1ZM37.9 0.4Q39.9 13.7 43.0 26.8Q40.7 13.5 39.0 0.2ZM39.4 0.4Q41.2 17.8 45.4 34.8Q42.8 17.5 41.4 0.1ZM49.8 0.4Q52.7 33.7 59.5 66.5Q54.2 33.5 51.7 0.2ZM62.5 0.4Q66.4 37.9 72.1 75.2Q67.6 37.7 64.0 0.2ZM64.6 0.4Q66.7 36.9 73.8 72.9Q67.6 36.8 65.6 0.2ZM65.6 0.4Q68.4 36.1 75.1 71.3Q69.9 35.9 67.4 0.2ZM68.9 0.4Q75.2 33.1 77.2 66.3Q76.1 33.0 70.0 0.2ZM76.2 0.4Q78.5 14.6 79.5 29.1Q79.7 14.5 77.6 0.2ZM78.4 0.3Q79.5 7.0 80.0 13.7Q80.5 6.9 79.6 0.2ZM60.5 -0.4Q62.4 23.0 67.0 46.2Q64.1 22.9 62.5 -0.6ZM64.9 -0.4Q68.6 24.0 70.8 48.6Q70.4 23.8 67.1 -0.6ZM66.4 -0.4Q71.1 26.6 72.4 53.9Q72.6 26.5 68.2 -0.6ZM68.9 -0.4Q71.9 29.2 75.1 58.9Q73.8 29.1 71.4 -0.6ZM204.3 -0.3Q203.5 1.1 203.2 3.0Q204.8 2.1 206.0 0.9ZM208.8 -0.3Q206.4 3.8 204.9 8.5Q207.8 4.7 210.7 0.8ZM217.3 -0.2Q212.2 8.3 208.7 17.7Q213.6 9.1 219.0 0.8ZM229.7 -0.3Q219.5 15.1 211.6 31.7Q221.0 16.0 231.5 0.9ZM240.1 0.0Q226.3 21.6 213.1 43.7Q227.1 22.1 241.1 0.7ZM245.5 0.4Q231.0 27.6 213.2 52.9Q232.1 28.4 247.0 1.3ZM253.9 1.2Q237.3 31.3 217.8 59.5Q238.3 31.9 255.1 2.0ZM257.9 5.1Q239.1 44.2 215.9 80.9Q240.5 45.0 259.6 6.0ZM259.7 11.4Q238.9 49.2 222.9 89.3Q239.9 49.6 260.8 11.9ZM261.1 29.2Q246.4 65.0 230.3 100.3Q247.4 65.5 262.4 29.7ZM261.6 34.3Q248.8 68.2 233.3 100.8Q250.1 68.7 263.2 35.0ZM261.7 36.8Q249.6 70.9 233.8 103.4Q251.1 71.6 263.7 37.7ZM262.3 39.5Q249.3 69.9 236.7 100.4Q250.5 70.4 263.8 40.1ZM262.6 41.7Q251.4 68.1 240.6 94.7Q252.5 68.6 264.1 42.3ZM262.7 44.4Q252.7 70.0 242.1 95.2Q254.3 70.6 264.7 45.2ZM263.2 47.2Q253.3 70.2 245.0 93.8Q254.7 70.8 264.9 47.9ZM264.3 56.0Q257.8 73.8 252.8 92.1Q259.3 74.3 266.3 56.7ZM265.3 61.0Q261.4 74.4 257.7 87.9Q262.5 74.7 266.6 61.4ZM265.8 65.6Q262.5 75.5 261.2 86.0Q263.6 75.8 267.2 66.0ZM262.6 11.4Q263.9 28.8 267.4 46.0Q264.9 28.7 263.8 11.2ZM263.1 26.2Q265.1 43.8 267.6 61.3Q266.1 43.7 264.4 26.1ZM263.8 34.9Q264.7 50.5 267.7 65.9Q266.2 50.4 265.6 34.8ZM264.8 43.2Q265.3 58.0 268.0 72.6Q266.6 57.9 266.5 43.1ZM300.6 -0.0Q297.2 8.3 293.0 16.3Q298.1 8.8 301.8 0.6ZM304.8 -0.1Q298.7 11.1 293.1 22.5Q299.9 11.7 306.2 0.7ZM307.0 -0.2Q301.2 12.2 294.3 24.0Q302.4 12.9 308.6 0.7ZM314.9 0.8Q304.4 19.5 294.2 38.4Q306.0 20.5 317.0 2.0ZM324.5 4.2Q312.1 29.5 297.4 53.6Q313.7 30.5 326.6 5.3ZM327.7 5.6Q311.5 30.5 299.0 57.5Q312.8 31.3 329.3 6.6ZM326.8 9.2Q311.0 34.0 298.9 60.9Q312.1 34.6 328.2 9.9ZM325.5 14.4Q313.8 41.5 298.4 66.5Q314.8 42.0 326.7 15.0ZM324.1 18.7Q312.9 42.5 300.7 65.9Q314.2 43.2 325.7 19.5ZM322.1 27.1Q309.5 51.0 299.2 76.1Q310.4 51.5 323.3 27.7ZM319.9 31.8Q308.0 53.7 299.6 77.3Q309.1 54.2 321.2 32.4ZM317.6 35.8Q308.7 58.5 298.9 80.8Q310.4 59.2 319.7 36.7ZM313.9 44.7Q307.3 62.7 300.8 80.7Q308.6 63.2 315.4 45.3ZM361.9 0.4Q362.6 11.7 364.6 22.8Q363.9 11.5 363.6 0.2ZM360.4 0.4Q361.8 14.4 363.5 28.4Q363.0 14.3 361.9 0.2ZM358.6 0.3Q359.3 16.7 361.8 33.0Q360.1 16.7 359.5 0.2ZM353.3 0.4Q356.8 22.5 358.0 44.8Q358.0 22.4 354.8 0.2ZM344.0 0.3Q348.0 27.7 350.1 55.2Q348.9 27.6 345.1 0.2ZM332.0 4.1Q331.5 37.0 336.3 69.6Q332.4 37.0 333.1 4.1ZM315.5 44.0Q315.6 65.3 313.1 86.4Q316.6 65.4 316.8 44.1ZM314.0 47.4Q311.4 67.3 312.0 87.3Q312.4 67.3 315.2 47.5ZM309.4 56.8Q309.4 70.6 307.6 84.3Q310.2 70.7 310.4 56.9ZM305.5 63.8Q304.9 72.1 304.5 80.3Q306.3 72.2 307.2 64.0ZM280.4 0.2Q279.3 10.5 279.2 20.8Q280.6 10.6 282.0 0.4ZM285.0 0.2Q282.4 16.7 278.6 32.9Q283.2 16.9 285.9 0.4ZM285.7 0.2Q283.7 14.9 280.0 29.2Q284.6 15.1 286.8 0.4ZM329.2 -0.9Q320.7 26.0 310.8 52.4Q322.5 26.7 331.5 -0.1ZM330.8 -0.9Q322.8 25.0 314.6 50.9Q324.7 25.7 333.2 -0.1ZM332.2 -0.9Q322.2 24.7 317.1 51.9Q324.3 25.4 334.9 -0.1ZM131.2 61.6Q124.3 61.4 117.4 61.1Q124.1 63.3 131.0 64.0ZM125.0 71.8Q119.0 71.2 112.9 71.6Q118.8 73.2 124.7 74.3ZM118.7 82.2Q114.1 81.6 109.4 82.2Q113.9 83.4 118.4 84.4ZM117.1 84.6Q113.2 84.6 109.1 84.9Q112.9 86.5 116.8 87.1ZM115.5 87.3Q111.7 87.5 107.9 87.9Q111.6 89.2 115.3 89.5ZM113.1 91.7Q109.7 91.6 106.2 92.2Q109.6 93.2 113.0 93.7ZM110.8 96.0Q108.3 96.0 105.7 96.7Q108.1 97.7 110.6 98.1ZM107.2 102.4Q105.3 102.4 103.3 103.2Q105.2 104.1 107.1 104.6ZM106.1 104.2Q104.4 104.3 102.6 105.4Q104.2 106.6 105.9 107.2Z"/>
<path fill="#4f82c4" d="M32.2 0.7Q34.1 3.1 36.5 5.2Q34.9 2.5 33.2 -0.1ZM48.4 0.4Q52.6 29.4 56.6 58.4Q53.5 29.3 49.5 0.2ZM52.0 0.4Q56.8 32.8 61.0 65.3Q57.8 32.7 53.3 0.2ZM73.4 0.4Q77.8 28.2 79.5 56.4Q79.1 28.1 75.0 0.2ZM62.8 -0.4Q64.5 24.3 69.2 48.7Q66.3 24.1 65.2 -0.6ZM206.9 -0.3Q205.4 2.9 204.2 6.2Q206.8 3.8 208.7 0.8ZM247.7 0.5Q228.3 26.9 213.5 56.3Q229.6 27.8 249.4 1.6ZM263.4 0.1Q265.1 11.4 266.6 22.7Q266.3 11.3 264.9 -0.0ZM263.0 6.0Q264.3 20.9 267.1 35.5Q265.4 20.7 264.3 5.9ZM261.8 17.3Q263.7 37.5 267.7 57.6Q265.1 37.4 263.5 17.1ZM309.9 -0.1Q300.8 13.2 294.3 28.0Q301.9 13.8 311.2 0.7ZM312.4 -0.0Q303.5 15.3 294.8 30.8Q304.4 15.9 313.5 0.7ZM364.8 0.4Q365.8 7.1 366.7 13.8Q367.2 7.0 366.6 0.2ZM345.8 0.4Q346.9 25.5 351.5 50.3Q348.1 25.4 347.3 0.2ZM341.8 0.6Q345.6 29.7 348.1 58.8Q346.8 29.5 343.3 0.5ZM336.6 1.4Q341.5 32.2 342.1 63.4Q342.4 32.1 337.7 1.3ZM329.6 9.5Q332.2 42.1 332.0 74.9Q333.3 42.1 331.0 9.4ZM328.2 13.3Q328.9 44.8 328.8 76.3Q329.7 44.8 329.2 13.3ZM324.8 21.4Q322.5 51.2 322.9 81.2Q323.8 51.3 326.5 21.5ZM323.7 24.1Q322.9 53.9 320.9 83.6Q324.2 54.0 325.5 24.2ZM318.4 37.9Q314.4 63.5 314.5 89.5Q315.2 63.6 319.4 38.0ZM287.4 0.1Q283.6 12.4 282.3 25.2Q284.9 12.7 289.1 0.5ZM331.6 -0.9Q324.5 26.0 315.8 52.4Q326.5 26.7 334.2 -0.1ZM139.1 19.5Q125.8 25.4 112.1 30.5Q126.4 27.2 139.9 21.8ZM138.7 25.5Q126.4 29.9 114.5 35.3Q127.0 31.5 139.5 27.5ZM136.3 38.3Q125.2 41.5 114.0 43.9Q125.6 43.2 136.8 40.5ZM135.5 41.3Q124.4 43.8 113.5 47.1Q124.9 46.2 136.1 44.2ZM134.0 48.2Q124.2 49.8 114.9 53.3Q124.7 51.9 134.5 50.7ZM108.4 99.9Q106.3 99.9 104.1 101.1Q106.1 102.3 108.2 102.9Z"/>
<path d="M140.9 0.3 L138.9 29.4 L131.1 62.8 L115.4 88.4 L103.6 110.0" stroke="#27406e" stroke-width="1.6" fill="none"/>
<path d="M141.500 12L140.500 31" stroke="#4a6a9a" stroke-width="1" fill="none"/>
</svg><!--/PALM--></div>

<div class="abs" id="vscroll"></div>
<div class="abs" id="hscroll"></div>
<svg style="left:408px;top:691px" width="6" height="8" viewBox="0 0 6 8"><path d="M6 0v8H4L0 5.500z" fill="#7a7a7a"/></svg>
<svg style="left:1203px;top:691.500px" width="6" height="7" viewBox="0 0 6 7"><path d="M0 0L6 4.500V7H0z" fill="#bdbdbd"/></svg>

</body>
</html>
